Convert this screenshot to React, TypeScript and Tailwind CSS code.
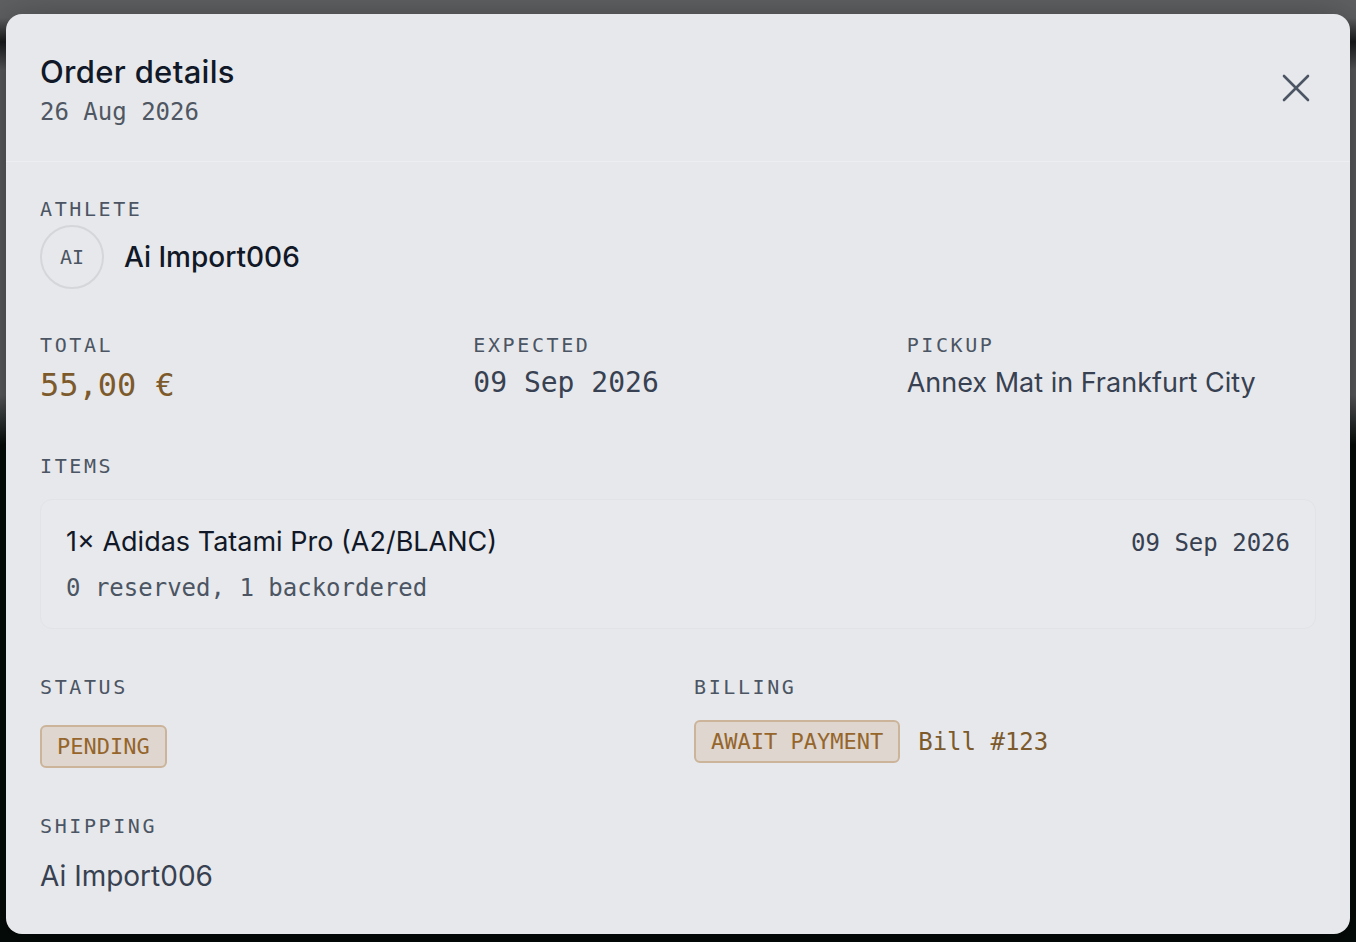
const sans = "font-['Inter','Noto_Sans',sans-serif]";
const mono = "font-['DejaVu_Sans_Mono','Liberation_Mono',monospace]";

function Label({ children }: { children: React.ReactNode }) {
  return (
    <div className={`${mono} text-[20px] leading-[28px] tracking-[0.13em] text-[#4b5563] uppercase`}>
      {children}
    </div>
  );
}

function Badge({ children }: { children: React.ReactNode }) {
  return (
    <span
      className={`${mono} inline-flex h-[43px] items-center rounded-md border-2 border-[#cbb49a] bg-[#ded6cf] px-[15px] text-[22px] leading-[28px] text-[#95652b]`}
    >
      {children}
    </span>
  );
}

function CloseIcon() {
  return (
    <svg width="28" height="28" viewBox="0 0 28 28" fill="none" stroke="#4b5563" strokeWidth="2.6" strokeLinecap="round">
      <line x1="2" y1="2" x2="26" y2="26" />
      <line x1="26" y1="2" x2="2" y2="26" />
    </svg>
  );
}

export default function App() {
  const order = {
    placed: "26 Aug 2026",
    athlete: "Ai Import006",
    initials: "AI",
    total: "55,00 €",
    expected: "09 Sep 2026",
    pickup: "Annex Mat in Frankfurt City",
    items: [{ qty: 1, name: "Adidas Tatami Pro (A2/BLANC)", reserved: 0, backordered: 1, date: "09 Sep 2026" }],
    status: "PENDING",
    billing: "AWAIT PAYMENT",
    bill: "Bill #123",
    shipping: "Ai Import006",
  };

  return (
    <div className="relative h-screen w-full overflow-hidden bg-[linear-gradient(to_bottom,#5f6062_0px,#5f6062_18px,#1a1b1c_42px,#5f6062_70px,#5f6062_395px,#050c0a_445px,#050c0a_100%)]">
      <div className="absolute left-[6px] top-[14px] w-[1344px] rounded-2xl bg-[#e7e8eb] shadow-[0_10px_40px_rgba(0,0,0,0.45)]">
        {/* header */}
        <div className="flex items-start justify-between border-b border-[#eceef1] px-[34px] pt-[40px] pb-[33px]">
          <div>
            <h2 className={`${sans} text-[31px] leading-[36px] font-medium tracking-[0.01em] text-[#111827]`}>Order details</h2>
            <div className={`${mono} mt-1.5 text-[24px] leading-[32px] text-[#4f5763]`}>{order.placed}</div>
          </div>
          <button className="mt-[20px] mr-[6px]">
            <CloseIcon />
          </button>
        </div>

        {/* body */}
        <div className="px-[34px] pt-[33px] pb-[40px]">
          <Label>Athlete</Label>
          <div className="mt-[2px] flex items-center gap-5">
            <div className={`${mono} flex h-16 w-16 items-center justify-center rounded-full border-2 border-[#d4d6da] text-[20px] text-[#4b5563]`}>
              {order.initials}
            </div>
            <div className={`${sans} text-[28px] leading-[36px] font-medium text-[#111827]`}>{order.athlete}</div>
          </div>

          <div className="mt-[42px] grid grid-cols-3 gap-6">
            <div>
              <Label>Total</Label>
              <div className={`${mono} mt-1.5 text-[32px] leading-[40px] text-[#7c5a2c]`}>{order.total}</div>
            </div>
            <div>
              <Label>Expected</Label>
              <div className={`${mono} mt-1.5 text-[28px] leading-[36px] text-[#374151]`}>{order.expected}</div>
            </div>
            <div>
              <Label>Pickup</Label>
              <div className={`${sans} mt-1.5 text-[27px] leading-[36px] text-[#374151]`}>{order.pickup}</div>
            </div>
          </div>

          <div className="mt-[47px]">
            <Label>Items</Label>
          </div>
          <div className="mt-[19px] flex flex-col gap-3">
            {order.items.map((it) => (
              <div key={it.name} className="rounded-xl border border-[#e1e3e7] bg-[#e8e9ec] px-[25px] pt-[24px] pb-[24px]">
                <div className="flex items-baseline justify-between">
                  <div className={`${sans} text-[27px] leading-[36px] text-[#111827]`}>
                    {it.qty}× {it.name}
                  </div>
                  <div className={`${mono} text-[24px] leading-[32px] text-[#374151]`}>{it.date}</div>
                </div>
                <div className={`${mono} mt-[12px] text-[24px] leading-[32px] text-[#4b5563]`}>
                  {it.reserved} reserved, {it.backordered} backordered
                </div>
              </div>
            ))}
          </div>

          <div className="mt-[44px] grid grid-cols-2 gap-8">
            <div>
              <Label>Status</Label>
              <div className="mt-[24px]">
                <Badge>{order.status}</Badge>
              </div>
            </div>
            <div>
              <Label>Billing</Label>
              <div className="mt-[19px] flex items-center gap-[18px]">
                <Badge>{order.billing}</Badge>
                <span className={`${mono} text-[24px] leading-[32px] text-[#7c5a2c]`}>{order.bill}</span>
              </div>
            </div>
          </div>

          <div className="mt-[44px]">
            <Label>Shipping</Label>
            <div className={`${sans} mt-[18px] text-[28px] leading-[36px] text-[#374151]`}>{order.shipping}</div>
          </div>
        </div>
      </div>
    </div>
  );
}
